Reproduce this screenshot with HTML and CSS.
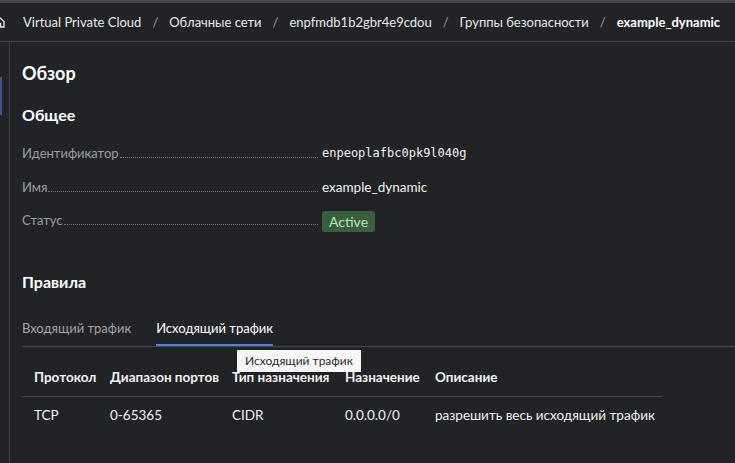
FILE: index.html
```html
<!DOCTYPE html>
<html lang="ru">
<head>
<meta charset="utf-8">
<title>example_dynamic</title>
<link rel="stylesheet" href="styles.css">
</head>
<body>
<div class="topstrip"></div>
<header class="header">
  <svg class="home" width="14" height="14" viewBox="0 0 14 14" fill="none" stroke="#e6e6e6" stroke-width="1.4">
    <path d="M2 6.5 L7 2 L12 6.5 V12 H2 Z"/>
    <path d="M5.5 12 V8.5 H8.5 V12"/>
  </svg>
  <nav class="crumbs">
    <span class="crumb">Virtual Private Cloud</span>
    <span class="sep">/</span>
    <span class="crumb">Облачные сети</span>
    <span class="sep">/</span>
    <span class="crumb">enpfmdb1b2gbr4e9cdou</span>
    <span class="sep">/</span>
    <span class="crumb">Группы безопасности</span>
    <span class="sep">/</span>
    <span class="crumb current">example_dynamic</span>
  </nav>
</header>
<div class="layout">
  <aside class="rail"><div class="rail-active"></div></aside>
  <main class="content">
    <h1 class="title">Обзор</h1>
    <h2 class="section">Общее</h2>
    <div class="props">
      <div class="prop"><div class="key"><span class="label">Идентификатор</span><span class="dots"></span></div><span class="value mono">enpeoplafbc0pk9l040g</span></div>
      <div class="prop"><div class="key"><span class="label">Имя</span><span class="dots"></span></div><span class="value">example_dynamic</span></div>
      <div class="prop"><div class="key"><span class="label">Статус</span><span class="dots"></span></div><span class="value"><span class="badge">Active</span></span></div>
    </div>
    <h2 class="section rules">Правила</h2>
    <div class="tabs">
      <div class="tab">Входящий трафик</div>
      <div class="tab active">Исходящий трафик</div>
      <div class="tooltip">Исходящий трафик</div>
    </div>
    <div class="table">
      <div class="row head">
        <div class="cell">Протокол</div>
        <div class="cell">Диапазон портов</div>
        <div class="cell">Тип назначения</div>
        <div class="cell">Назначение</div>
        <div class="cell">Описание</div>
      </div>
      <div class="row">
        <div class="cell">TCP</div>
        <div class="cell">0-65365</div>
        <div class="cell">CIDR</div>
        <div class="cell">0.0.0.0/0</div>
        <div class="cell">разрешить весь исходящий трафик</div>
      </div>
    </div>
  </main>
</div>
</body>
</html>
```

FILE: styles.css
```css
html, body {
  margin: 0;
  padding: 0;
  background: #222327;
  color: #ececec;
  font-family: Lato, "Liberation Sans", sans-serif;
  font-size: 14px;
  overflow: hidden;
  height: 100%;
}

.topstrip {
  height: 3px;
  background: #46454d;
}

.header {
  height: 39px;
  box-sizing: border-box;
  border-bottom: 1px solid #47474c;
  display: flex;
  align-items: center;
}

.home {
  margin-left: -8px;
  margin-right: 17px;
  flex: none;
}

.crumbs {
  display: flex;
  align-items: center;
  white-space: nowrap;
  font-size: 13px;
  color: #e8e8e8;
}

.sep {
  color: #9a9a9e;
  margin: 0 11px;
}

.crumb.current {
  font-weight: bold;
  color: #ffffff;
}

.layout {
  display: flex;
  height: calc(100% - 42px);
}

.rail {
  width: 9px;
  border-right: 1px solid #3d3d42;
  flex: none;
  padding-top: 35px;
}

.rail-active {
  width: 2px;
  height: 38px;
  background: #3f5388;
}

.content {
  position: relative;
  padding-left: 12px;
  flex: 1;
}

.title {
  margin: 19px 0 0;
  font-size: 18px;
  line-height: 24px;
  font-weight: bold;
  color: #ffffff;
}

.section {
  margin: 20px 0 0;
  font-size: 16px;
  line-height: 20px;
  font-weight: bold;
  color: #ffffff;
}

.props {
  margin-top: 17px;
  display: flex;
  flex-direction: column;
  gap: 11.5px;
}

.prop {
  display: flex;
  align-items: center;
  height: 22px;
}

.key {
  width: 296px;
  flex: none;
  display: flex;
  align-items: baseline;
  font-size: 13px;
  line-height: 22px;
}

.label {
  color: #9d9da2;
  flex: none;
}

.dots {
  flex: 1;
  border-bottom: 1px dotted #77777c;
  margin-left: 1px;
}

.value {
  margin-left: 4px;
  color: #f2f2f2;
  font-size: 13.5px;
  line-height: 22px;
}

.mono {
  font-family: "DejaVu Sans Mono", "Liberation Mono", monospace;
  font-size: 12px;
}

.badge {
  display: inline-block;
  background: #39603d;
  color: #b6e6b4;
  border-radius: 3px;
  padding: 0 7px;
  line-height: 21px;
  font-size: 14px;
  vertical-align: middle;
}

.rules {
  margin-top: 41px;
}

.tabs {
  margin-top: 26px;
  display: flex;
  gap: 25px;
  border-bottom: 1px solid #48484d;
  position: relative;
}

.tab {
  line-height: 20px;
  padding-bottom: 6px;
  border-bottom: 2px solid transparent;
  color: #a2a2a7;
  font-size: 13px;
}

.tab.active {
  color: #ffffff;
  border-bottom-color: #4f7ff0;
}

.tooltip {
  position: absolute;
  left: 215px;
  top: 32px;
  background: #f7f7f7;
  color: #2b2b2b;
  font-size: 12px;
  line-height: 22px;
  padding: 0 8px;
  z-index: 2;
  white-space: nowrap;
}

.table {
  margin-top: 10px;
  width: 640px;
}

.row {
  display: grid;
  grid-template-columns: 76px 122px 113px 90px 1fr;
  line-height: 20px;
  font-size: 13.5px;
}

.row.head {
  font-weight: bold;
  border-bottom: 1px solid #46464b;
  padding: 10px 0 9px;
}

.row:not(.head) {
  padding: 8px 0;
}

.cell {
  padding-left: 12px;
  white-space: nowrap;
  color: #f2f2f2;
}
```
